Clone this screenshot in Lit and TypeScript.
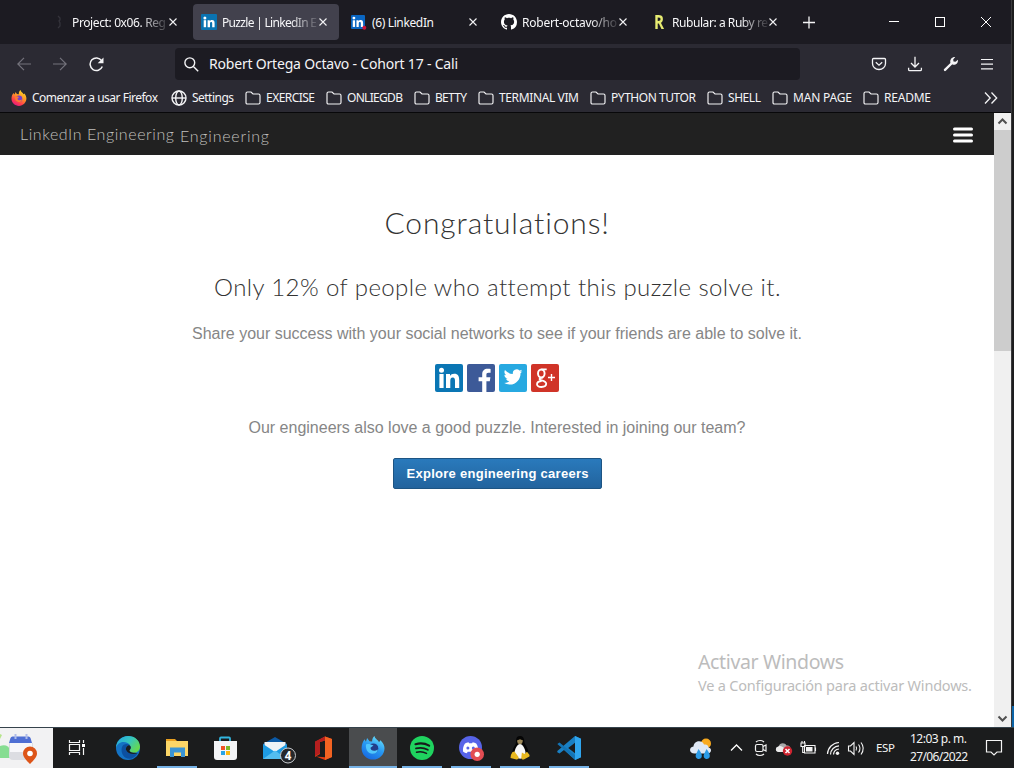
import { LitElement, html, svg, css } from "lit";
import { customElement, property } from "lit/decorators.js";
import { styleMap } from "lit/directives/style-map.js";
import { classMap } from "lit/directives/class-map.js";

/** A single line of text whose tracking is adjusted to fill a given width. */
@customElement("fit-text")
export class FitText extends LitElement {
  @property({ type: Number }) width = 0;
  static styles = css`
    :host { display: block; flex: none; white-space: pre; }
    .run { display: inline-block; }
  `;
  render() {
    return html`<span class="run"><slot></slot></span>`;
  }
  firstUpdated() {
    const run = this.renderRoot.querySelector(".run") as HTMLElement;
    const count = (this.textContent || "").length;
    const natural = run.getBoundingClientRect().width;
    this.style.width = this.width + "px";
    if (count > 1) this.style.letterSpacing = (this.width - natural) / (count - 1) + "px";
  }
}

/** An inline drawing cut out of a shared pixel grid. */
const icon = (x: number, y: number, w: number, h: number, body: unknown) =>
  html`<svg class="icon" width=${w} height=${h} viewBox="${x} ${y} ${w} ${h}" fill="none">${body}</svg>`;

const linkedInLetters = svg`<g fill="#fff"><circle cx="3.9" cy="3.9" r="1.5"/><rect x="2.7" y="6.2" width="2.4" height="7"/><path d="M6.6 6.2h2.2v1c.4-.7 1.2-1.2 2.2-1.2 2 0 2.6 1.2 2.6 3.2v4h-2.4V9.7c0-1-.2-1.7-1-1.7-.9 0-1.2.7-1.2 1.7v3.5H6.6z"/></g>`;

const favicons: Record<string, unknown> = {
  holberton: icon(0, 0, 16, 16, svg`<path d="M7 2l2 2v2l-1 1 1 2v3l-2 2" stroke="#34333b" stroke-width="1.3"/>`),
  linkedin: icon(0, 0, 16, 16, svg`<rect width="16" height="16" rx="1" fill="#0a73b1"/>${linkedInLetters}`),
  linkedinAlert: icon(0, 0, 16, 16, svg`<rect y="1" width="14" height="14" rx="1" fill="#0a66c2"/><g transform="translate(-.8 .4) scale(.95)">${linkedInLetters}</g><circle cx="13.3" cy="13.7" r="2" fill="#c8143c"/>`),
  github: icon(0, 0, 16, 16, svg`<path fill="#fff" d="M8 0C3.58 0 0 3.58 0 8c0 3.54 2.29 6.53 5.47 7.59.4.07.55-.17.55-.38 0-.19-.01-.82-.01-1.49-2.01.37-2.53-.49-2.69-.94-.09-.23-.48-.94-.82-1.13-.28-.15-.68-.52-.01-.53.63-.01 1.08.58 1.23.82.72 1.21 1.87.87 2.33.66.07-.52.28-.87.51-1.07-1.78-.2-3.64-.89-3.64-3.95 0-.87.31-1.59.82-2.15-.08-.2-.36-1.02.08-2.12 0 0 .67-.21 2.2.82.64-.18 1.32-.27 2-.27s1.36.09 2 .27c1.53-1.04 2.2-.82 2.2-.82.44 1.1.16 1.92.08 2.12.51.56.82 1.27.82 2.15 0 3.07-1.87 3.75-3.65 3.95.29.25.54.73.54 1.48 0 1.07-.01 1.93-.01 2.2 0 .21.15.46.55.38A8.01 8.01 0 0 0 16 8c0-4.42-3.58-8-8-8z"/>`),
  rubular: html`<span class="rubular">R</span>`,
};

const tabs = [
  { icon: "holberton", title: "Project: 0x06. Reg", width: 94 },
  { icon: "linkedin", title: "Puzzle | LinkedIn E", width: 95, active: true },
  { icon: "linkedinAlert", title: "(6) LinkedIn", width: 62 },
  { icon: "github", title: "Robert-octavo/ho", width: 95 },
  { icon: "rubular", title: "Rubular: a Ruby re", width: 96 },
];

const folder = icon(0, 0, 16, 16, svg`<path d="M1 13V3.5Q1 2 2.5 2H6l2 2h5.5Q15 4 15 5.500V12.500Q15 14 13.500 14H2.500Q1 14 1 12.500z" stroke="#f4f4f6" stroke-width="1.15"/>`);
const globe = icon(0, 0, 16, 16, svg`<g stroke="#f4f4f6" stroke-width="1.4"><circle cx="8" cy="8" r="7"/><ellipse cx="8" cy="8" rx="3.300" ry="7"/><path d="M1 8h14"/></g>`);
const firefox = icon(0, 0, 16, 16, svg`
  <defs><linearGradient id="ff" x1=".8" y1="0" x2=".25" y2="1"><stop offset="0" stop-color="#ffe226"/><stop offset=".45" stop-color="#ff9128"/><stop offset=".75" stop-color="#ff3d4d"/><stop offset="1" stop-color="#e31587"/></linearGradient></defs>
  <path fill="url(#ff)" d="M9.500 0c.3 2 2.300 2.400 3 4.200l.9-.6c1.400 1.600 2 3.300 2 5 0 4-3.300 7.300-7.400 7.300S.5 12.900.5 8.800C.5 6.500 1.200 4.500 2.500 3l.8 1.500C4 3.500 4.400 2.800 4.600 2l1.300 2.100 1.900.2C7.700 2.500 8.300 1 9.500 0z"/>
  <circle cx="8" cy="8.700" r="3.300" fill="#7542c9"/><path d="M4 6.500c1.600-.7 2.800 0 4 .7l-1.500 1.200C6.300 10 8.500 11 11 9.500c-.5 2-2 2.800-3.700 2.500C5 11.700 3.600 9.300 4 6.500z" fill="#ff7a2f"/>`);

const bookmarks = [
  { icon: firefox, label: "Comenzar a usar Firefox", slot: 160, width: 126 },
  { icon: globe, label: "Settings", slot: 74, width: 42 },
  { icon: folder, label: "EXERCISE", slot: 81, width: 49 },
  { icon: folder, label: "ONLIEGDB", slot: 88, width: 56 },
  { icon: folder, label: "BETTY", slot: 64, width: 32 },
  { icon: folder, label: "TERMINAL VIM", slot: 112, width: 80 },
  { icon: folder, label: "PYTHON TUTOR", slot: 117, width: 85 },
  { icon: folder, label: "SHELL", slot: 65, width: 33 },
  { icon: folder, label: "MAN PAGE", slot: 91, width: 59 },
  { icon: folder, label: "README", slot: 100, width: 47 },
];

const closeIcon = icon(0, 0, 8, 8, svg`<path d="M.5.5l7 7M7.500.5l-7 7" stroke="#f4f4f6" stroke-width="1.1"/>`);

const social = [
  icon(0, 0, 28, 28, svg`<rect width="28" height="28" rx="2" fill="#0a76b4"/><g fill="#fff"><circle cx="6.500" cy="6.200" r="2.500"/><rect x="4.400" y="10" width="4.200" height="14"/><path d="M11 10h4v1.900c.8-1.300 2.200-2.200 4.200-2.200 4 0 5 2.600 5 6.400V24H20v-7c0-1.800-.2-3.600-2.200-3.600-2.100 0-2.500 1.600-2.500 3.500V24H11z"/></g>`),
  icon(0, 0, 28, 28, svg`<rect width="28" height="28" rx="2" fill="#3d5a98"/><path fill="#fff" d="M15.200 28V17.300H11.600v-4h3.600v-3c0-3.600 2.200-5.500 5.400-5.500 1.500 0 2.500.1 3 .2v3.700h-2.100c-1.800 0-2.100.8-2.100 2.100v2.500h4l-.6 4h-3.400V28z"/>`),
  icon(0, 0, 28, 28, svg`<rect width="28" height="28" rx="2" fill="#27a9e1"/><path fill="#fff" transform="translate(4.700 3.600) scale(.78)" d="M23.950 4.570a10 10 0 0 1-2.820.77 4.960 4.960 0 0 0 2.160-2.720c-.95.550-2 .950-3.130 1.180a4.920 4.920 0 0 0-8.380 4.480C7.690 8.090 4.070 6.130 1.640 3.160a4.820 4.820 0 0 0-.67 2.470c0 1.710.87 3.210 2.190 4.100a4.900 4.900 0 0 1-2.230-.62v.06a4.920 4.920 0 0 0 3.950 4.830 5 5 0 0 1-2.210.08 4.940 4.940 0 0 0 4.600 3.420A9.870 9.870 0 0 1 0 19.540a13.990 13.990 0 0 0 7.550 2.210c9.050 0 14-7.500 14-13.980 0-.21 0-.42-.02-.63a9.940 9.940 0 0 0 2.460-2.550z"/>`),
  icon(0, 0, 28, 28, svg`<rect width="28" height="28" rx="2" fill="#d03428"/><g stroke="#fff"><ellipse cx="10.300" cy="9.500" rx="3.300" ry="4" stroke-width="1.900"/><path d="M10.500 5.400h5.200M12 13.300c-2 .5-3.600 1-3.500 1.900.1 1.200 6.700 1.300 6.700 4.400 0 2.200-2.200 3.400-4.800 3.400s-4.400-1-4.400-2.800c0-2 2.500-3 4.500-3.200" stroke-width="1.800"/><path d="M17 13.500h7M20.500 10v7" stroke-width="1.400"/></g>`),
];

/* Taskbar drawings use window coordinates, one 48px cell each. */
const cell = (x: number, body: unknown) => icon(x, 727, 48, 41, body);

const apps = [
  { art: cell(104, svg`<defs><linearGradient id="e1" x1="0" y1="0" x2="1" y2=".6"><stop offset="0" stop-color="#21a5e8"/><stop offset=".55" stop-color="#37c6bd"/><stop offset="1" stop-color="#65d94f"/></linearGradient></defs>
    <circle cx="128" cy="748" r="12" fill="#1473c5"/>
    <path fill="url(#e1)" d="M116 748c0-7 5.500-12 12.200-12 7 0 11.800 5 11.800 10.500 0 4-2.800 6.300-6.300 6.300-3 0-4.900-1-4.300-2 1.200-2 1.500-3 1-4.500-1-3-4-4.300-7-4.300-3.500 0-6.500 2.200-7.400 6z"/>
    <path fill="#0c50a0" d="M122 747c1-3 5-4 7.500-2-2.500 0-4.300 2.500-3.300 5.300 1.200 3.300 6.500 4.800 11.500 3-2.700 5-8 6.800-12 4.500-3.500-2-5-7-3.700-10.800z"/>
    <path fill="#1b1d1f" d="M129.400 745.200c2 1 1.800 3.300.3 4.800-1.100 1.200 2 3 5.300 2.700l2.700.6c-5 1.800-10.300.3-11.500-3-.9-2.500.7-5.100 3.200-5.100z"/>`) },
  { run: 1, art: cell(153, svg`<path fill="#e9a020" d="M166 739h9l2 2h10v4h-21z"/><rect x="166" y="741" width="22" height="15" fill="#fcd667"/><path fill="#3a94d4" d="M170 747.500h15V757h-4v-4.500h-7V757h-4z"/>`) },
  { art: cell(202, svg`<path d="M220 742v-3.500q0-1 1-1h8q1 0 1 1v3.500" stroke="#32b5df" stroke-width="1.800"/><path fill="#f4f5f7" d="M214 741h23v16q0 3-3 3h-17q-3 0-3-3z"/><path fill="#ef5426" d="M221 746h4v4h-4z"/><path fill="#7eb928" d="M226 746h4v4h-4z"/><path fill="#28a4e6" d="M221 751h4v4h-4z"/><path fill="#fab812" d="M226 751h4v4h-4z"/>`) },
  { art: cell(251, svg`<path fill="#0c5aa6" d="M263 744l12-7 12 7v5h-24z"/><path fill="#eef3f7" d="M264.500 742h21v9l-10.500 5-10.500-5z"/><path fill="#1d9be3" d="M263 744l12 8 12-8v15h-24z"/><path fill="#53bdf0" d="M263 759l12-8.500 12 8.500z"/><circle cx="288" cy="755.500" r="7.500" fill="#26282b" stroke="#c9cccf" stroke-width="1"/><text x="288" y="759.500" text-anchor="middle" font-family="Noto Sans" font-size="11.500" font-weight="700" fill="#fff">4</text>`) },
  { art: cell(300, svg`<path fill="#e43b12" d="M325 736.500l7 2.500v18l-7 3-9-3.500 9 .7v-16.700l-5 1.500v12l-5 3V742z"/><path fill="#b61f1f" d="M325 736.500l-10 5V756l5-2.800V742l5-1.500z"/><path fill="#f26322" d="M325 736.500l7 2.500v18l-7 3z"/>`) },
  { run: 2, art: cell(349, svg`<defs><linearGradient id="fd" x1=".8" y1="0" x2=".3" y2="1"><stop offset="0" stop-color="#6de3fa"/><stop offset=".5" stop-color="#2899f2"/><stop offset="1" stop-color="#1769e0"/></linearGradient></defs><path fill="url(#fd)" d="M374.500 736c.5 3 3.500 3.700 4.500 6.200l1.500-2c3 3 4 5.700 4 8 0 6.300-5.200 11.400-11.500 11.400s-11.400-5.100-11.400-11.400c0-3.500 1-6.500 3-9l1.300 2.500 1.200-3.700 2.400 3.200 2.600.3c0-2.500.9-4.400 2.400-5.500z"/><circle cx="373.300" cy="748.400" r="5" fill="#233d89"/><path fill="#4fc6fc" d="M366 744.500c2.500-1 5 0 7.500 1l-3 2.300c0 2.700 3.600 4.300 7.500 1.700-1 4-4 5-7 4-4-1-5.500-5-5-9z"/>`) },
  { run: 1, art: cell(398, svg`<circle cx="422" cy="748" r="12" fill="#1fd35f"/><g stroke="#17191b" stroke-linecap="round"><path d="M415.500 744.200c4.500-1.300 9.700-.8 13.600 1.400" stroke-width="2.200"/><path d="M416 748.400c4-1.100 8.300-.6 11.800 1.300" stroke-width="1.800"/><path d="M416.500 752.200c3.500-.8 7-.5 10 1.200" stroke-width="1.500"/></g>`) },
  { run: 1, art: cell(447, svg`<circle cx="470.500" cy="747.500" r="11.500" fill="#5764e8"/><path fill="#fff" d="M465 743.500c1-.8 2.200-1.200 3.500-1.300l.6 1h3l.6-1c1.300.1 2.500.5 3.500 1.300 1.600 2.400 2.300 5 2 8-1.200 1-2.500 1.500-3.800 1.700l-.9-1.500h-5.800l-.9 1.500c-1.300-.2-2.600-.7-3.800-1.700-.3-3 .4-5.600 2-8z"/><circle cx="467.900" cy="748" r="1.500" fill="#5764e8"/><circle cx="473.300" cy="748" r="1.500" fill="#5764e8"/><circle cx="477.200" cy="754.300" r="6.800" fill="#e34d53"/><circle cx="477.200" cy="754.300" r="2.600" fill="#fff"/>`) },
  { run: 1, art: cell(496, svg`<path fill="#050505" d="M516 742c0-4 1-6 4-6s4.300 2 4.300 5.500c0 3 4 6 4 11.500 0 4-3 6-8 6s-8-2-8-6c0-5 3.700-8 3.700-11z"/><path fill="#f7f7f7" d="M520 744c2.500 0 5.500 5 5.500 9s-2 5.700-5.300 5.700-5.700-1.700-5.700-5.700 3-9 5.500-9z"/><path fill="#9c8858" d="M517 740.500l3-1.200 3 1.200-1 3-2 .8-2.200-.8z"/><path fill="#e8b81f" d="M512.500 752l2-.5 4 5.500c.6 1.600-.5 2.600-2 2.500l-6-1.600.4-3zM527 751.800l2.600 3.200-.2 1.400-5.600 3c-1.500.4-2.600-.6-2.500-2l.6-5 2.500 1.600z"/>`) },
  { run: 1, art: cell(545, svg`<path fill="#1a80c4" d="M575 736l6 2.700v18.600l-6 2.700-11-10-4.500 3.500-2.200-1.200v-1.300L575 736zm0 6.800l-6.800 5.200 6.800 5.200z" fill-rule="evenodd"/><path fill="#1374b6" d="M557.300 744l2.200-1.500L576 756v4z"/><path fill="#2fa5ee" d="M575 736l6 2.700v18.600l-6 2.700z"/>`) },
];

@customElement("app-root")
export class AppRoot extends LitElement {
  static styles = css`
    :host { display: block; width: 1014px; height: 768px; overflow: hidden; font-family: "Noto Sans", sans-serif; }
    .screen { position: relative; display: flex; flex-direction: column; width: 1014px; height: 768px; background: #fff; }
    .icon { display: block; flex: none; }
    .window { display: flex; height: 727px; flex: none; }
    .browser { display: flex; flex-direction: column; width: 1011px; }
    .edge { display: flex; flex-direction: column; width: 2px; border-left: 1px solid #3a3a3c; background: #1d1d1e; }
    .edge-blue { margin-top: auto; height: 21px; background: #0b64a8; }

    .tabbar { display: flex; height: 44px; background: #1c1b22; color: #f7f7f9; font-size: 12px; }
    .tabs { display: flex; gap: 4px; padding: 4px 0 4px 43px; }
    .tab { display: flex; align-items: center; box-sizing: border-box; width: 146px; height: 36px; padding: 0 12px 0 8px; border-radius: 4px; }
    .active { background: #42414d; }
    .title { width: 97px; margin: 1px 0 0 5px; overflow: hidden; line-height: 20px; }
    .faded { mask-image: linear-gradient(to right, #000 70%, transparent 102%); }
    .rubular { width: 16px; text-align: center; font: 700 19px/20px "Open Sans", sans-serif; transform: scaleX(.8); color: #e7ec72; }
    .newtab { margin: 16px 0 0 14px; }
    .controls { display: flex; margin: 16px 20px 0 auto; gap: 36px; }

    .navbar { display: flex; align-items: center; height: 40px; background: #2b2a33; }
    .nav { display: flex; align-items: center; width: 158px; padding-left: 17px; gap: 22px; }
    .url { display: flex; align-items: center; box-sizing: border-box; width: 625px; height: 32px; padding-left: 9px; gap: 10px; border-radius: 4px; background: #1c1b22; color: #f4f4f6; font-size: 14px; line-height: 20px; margin-top: 0; }
    .actions { display: flex; align-items: center; gap: 20px; margin-left: 71px; }

    .bookmarks { display: flex; align-items: center; height: 28px; padding-left: 11px; background: #2b2a33; border-bottom: 1px solid #08080a; color: #f4f4f6; font-size: 12px; line-height: 18px; }
    .bookmark { display: flex; align-items: center; gap: 5px; flex: none; }
    .more { margin-left: 21px; }

    .viewport { display: flex; flex: 1; min-height: 0; }
    .page { display: flex; flex-direction: column; align-items: center; width: 994px; background: #fff; color: #868686; font: 16px/23px "Liberation Sans", sans-serif; }
    .site { display: flex; box-sizing: border-box; align-self: stretch; height: 42px; padding: 9px 21px 0 20px; background: #212121; color: #c0c0be; font: 16px/24px Lato, sans-serif; }
    .brand { font-weight: 300; }
    .section { margin: 2px 0 0 6px; font-weight: 300; }
    .burger { margin: 5px 0 0 auto; }
    .heading { margin: 47px 0 0; color: #333; font: 300 30px/40px Lato, sans-serif; }
    .lead { margin: 29px 0 0; color: #333; font: 300 24px/31px Lato, sans-serif; }
    .share { margin-top: 20px; }
    .social { display: flex; gap: 4px; margin-top: 19px; }
    .join { margin-top: 24px; }
    .cta { box-sizing: border-box; display: flex; justify-content: center; width: 209px; height: 31px; margin: 19px 0 0 1px; padding: 0; border: 1px solid #1d5483; border-radius: 2px; background: linear-gradient(#2a7abc, #22639d); color: #fff; font: 700 13px/29px "Liberation Sans", sans-serif; }

    .scrollbar { display: flex; flex-direction: column; width: 17px; background: #f0f0f0; }
    .thumb { height: 221px; background: #cdcdcd; }
    .down { margin-top: auto; }

    .watermark { position: absolute; left: 698px; top: 647px; color: #bcbcbc; font-weight: 400; }
    .wm-title { font-size: 19.5px; line-height: 29px; }
    .wm-body { font-size: 14.5px; line-height: 18px; }

    .taskbar { display: flex; height: 41px; flex: none; background: #1b1c1d; color: #f4f4f4; font-size: 12px; }
    .taskbar { box-shadow: inset 0 1px #35434c; }
    .apps { display: flex; gap: 1px; margin-left: 3px; }
    .app { position: relative; width: 48px; height: 41px; }
    .focused { background: linear-gradient(#35434c 1px, #4a4c4e 1px); }
    .running::after { content: ""; position: absolute; left: 4px; right: 4px; bottom: 0; height: 2px; background: #76b2e6; }
    .focused::after { left: 0; right: 0; }
    .tray { margin-left: 92px; }
    .lang { margin: 12px 0 0 6px; line-height: 18px; font-size: 11.5px; }
    .clock { margin: 3px 0 0 15px; line-height: 18px; }
  `;

  private chromeTop() {
    return html`
      <div class="tabbar">
        <div class="tabs">
          ${tabs.map((t) => html`
            <div class=${classMap({ tab: true, active: !!t.active })}>
              ${favicons[t.icon]}
              <div class=${classMap({ title: true, faded: t.width > 80 })}><fit-text width=${t.width}>${t.title}</fit-text></div>
              ${closeIcon}
            </div>`)}
        </div>
        <div class="newtab">${icon(0, 0, 12, 13, svg`<path d="M0 6.500h12M6 .5v12" stroke="#f4f4f6" stroke-width="1.300"/>`)}</div>
        <div class="controls">
          ${icon(0, 0, 10, 12, svg`<path d="M0 5.500h10" stroke="#fff"/>`)}
          ${icon(0, 0, 10, 12, svg`<rect x=".5" y="1.500" width="9" height="9" stroke="#fff"/>`)}
          ${icon(0, 0, 10, 12, svg`<path d="M0 1l10 10M10 1L0 11" stroke="#fff"/>`)}
        </div>
      </div>
      <div class="navbar">
        <div class="nav">
          ${icon(0, 0, 14, 14, svg`<path d="M14 7H.8M7 .8L.8 7 7 13.200" stroke="#74737c" stroke-width="1.200"/>`)}
          ${icon(0, 0, 14, 14, svg`<path d="M0 7h13.200M7 .8L13.200 7 7 13.200" stroke="#74737c" stroke-width="1.200"/>`)}
          ${icon(0, 0, 15, 15, svg`<path d="M12.600 3.600A6.300 6.300 0 1 0 13.300 9.500" stroke="#f4f4f6" stroke-width="1.500"/><path d="M14.500.5v5.800H8.700z" fill="#f4f4f6"/>`)}
        </div>
        <div class="url">
          ${icon(0, 0, 15, 15, svg`<circle cx="5.800" cy="5.800" r="4.900" stroke="#f4f4f6" stroke-width="1.400"/><path d="M9.400 9.400l4.800 4.800" stroke="#f4f4f6" stroke-width="1.400"/>`)}
          <fit-text width="249">Robert Ortega Octavo - Cohort 17 - Cali</fit-text>
        </div>
        <div class="actions">
          ${icon(0, 0, 16, 16, svg`<path d="M2.500 2.500h11q1 0 1 1v4a6.500 6 0 0 1-13 0v-4q0-1 1-1z" stroke="#f4f4f6" stroke-width="1.300"/><path d="M4.800 6.300L8 9.200l3.200-2.900" stroke="#f4f4f6" stroke-width="1.300"/>`)}
          ${icon(0, 0, 16, 16, svg`<path d="M8 .8v10M4 7l4 4 4-4M1.600 11.800v1.700q0 1.200 1.200 1.200h10.400q1.200 0 1.200-1.200v-1.700" stroke="#f4f4f6" stroke-width="1.300"/>`)}
          ${icon(0, 0, 16, 16, svg`<path d="M2 13.900L9 7" stroke="#f4f4f6" stroke-width="2.400" stroke-linecap="round"/><path fill="#f4f4f6" d="M7.300 6.500c-.4-3 1.500-5.500 4.900-5.400l-2 2.300.3 2 2 .4 2.400-2c.5 3.400-2 5.400-5 5z"/>`)}
          ${icon(0, 0, 16, 16, svg`<path d="M2 3.500h12M2 8.200h12M2 12.800h12" stroke="#f4f4f6" stroke-width="1.200"/>`)}
        </div>
      </div>
      <div class="bookmarks">
        ${bookmarks.map((b) => html`
          <div class="bookmark" style=${styleMap({ width: b.slot + "px" })}>${b.icon}<fit-text width=${b.width}>${b.label}</fit-text></div>`)}
        <div class="more">${icon(0, 0, 14, 12, svg`<path d="M1 .5L6.200 6 1 11.500M7.500.5L12.700 6l-5.200 5.500" stroke="#f4f4f6" stroke-width="1.300"/>`)}</div>
      </div>`;
  }

  private page() {
    return html`
      <div class="page">
        <header class="site">
          <fit-text class="brand" width="154">LinkedIn Engineering</fit-text>
          <fit-text class="section" width="89">Engineering</fit-text>
          <div class="burger">${icon(0, 0, 20, 16, svg`<path d="M1.500 2h17M1.500 8h17M1.500 14h17" stroke="#fff" stroke-width="3" stroke-linecap="round"/>`)}</div>
        </header>
        <h1 class="heading"><fit-text width="225">Congratulations!</fit-text></h1>
        <h2 class="lead"><fit-text width="566">Only 12% of people who attempt this puzzle solve it.</fit-text></h2>
        <fit-text class="share" width="610">Share your success with your social networks to see if your friends are able to solve it.</fit-text>
        <div class="social">${social}</div>
        <fit-text class="join" width="497">Our engineers also love a good puzzle. Interested in joining our team?</fit-text>
        <button class="cta"><fit-text width="182">Explore engineering careers</fit-text></button>
      </div>`;
  }

  private tray() {
    return html`
      <div class="tray">${icon(685, 727, 185, 41, svg`
        <circle cx="706" cy="743.500" r="5" fill="#f8a91f"/>
        <path fill="#dfe8f5" d="M694.500 753.500c-5.500 0-6-6.500-1-7 .5-6 8.500-7 10.500-2 3-.5 4.500 1 4.500 3 4 1 3 6-1 6z"/>
        <path fill="#2c9ce8" d="M698.500 749c2.600 3.500 3.500 5.300 3.300 7.300-.2 2-2 3-3.800 2.600-2-.5-3-2.500-2-4.700zM706.500 749c2.600 3.500 3.500 5.300 3.300 7.300-.2 2-2 3-3.800 2.600-2-.5-3-2.500-2-4.700z"/>
        <path d="M731 750.500l5.500-5.500 5.500 5.500" stroke="#fff" stroke-width="1.300"/>
        <g stroke="#f2f2f2" stroke-width="1.200"><rect x="755.500" y="744.500" width="7.500" height="7" rx="1.500"/><path d="M763 746.500l3-1.500v6l-3-1.500M756 742c2-2 6-2 8 0M756 754c2 2 6 2 8 0"/></g>
        <path fill="#a9a9a9" d="M779 752c-4 0-4-5-.5-5.500 1-4 6.500-4.500 8-1 3-.5 4.500 1.500 4 6z"/><path fill="#ececec" d="M779 752c-4 0-4-5-.5-5.500 2-1 4 0 6 2v3.500z"/>
        <circle cx="787.500" cy="751" r="4.700" fill="#cf2430"/><path d="M785.500 749l4 4M789.500 749l-4 4" stroke="#fff" stroke-width="1.500"/>
        <path d="M804.500 745.500h10.500v7.500h-10.500zM815.500 747.500v3.500M801 743h4v3.500h-4zM802 741v2M804.500 741v2M802.700 746.500v6h1.800" stroke="#f4f4f4" stroke-width="1.100"/><path fill="#f4f4f4" d="M806 747h6.500v4.500H806z"/>
        <g stroke="#f2f2f2" stroke-width="1.200"><path d="M827.500 754a12 12 0 0 1 11.500-11.500M830.500 754.500a9 9 0 0 1 8.500-8.700M833.500 754.500a6 6 0 0 1 5.500-5.500" /></g><circle cx="837.500" cy="753.200" r="1.700" fill="#f4f4f4"/>
        <g stroke="#f4f4f4" stroke-width="1.100"><path d="M848.500 746h2l3.500-3.500v12l-3.500-3.500h-2zM856 746.500q1.300 1.700 0 4M858.500 744.500q3 3.700 0 8M861 742.500q4.500 5.700 0 12"/></g>`)}</div>
      <fit-text class="lang" width="19">ESP</fit-text>
      <div class="clock">
        <fit-text width="57">12:03 p. m.</fit-text>
        <fit-text width="58">27/06/2022</fit-text>
      </div>
      <div>${icon(968, 727, 46, 41, svg`<path d="M986.500 740.500h15v11.500h-4.500l-3 3-3-3h-4.500z" stroke="#f4f4f4" stroke-width="1.200"/>`)}</div>`;
  }

  render() {
    return html`
      <div class="screen">
        <div class="window">
          <div class="browser">
            ${this.chromeTop()}
            <div class="viewport">
              ${this.page()}
              <div class="scrollbar">
                ${icon(0, 0, 17, 17, svg`<path d="M4.500 10.500l4-4 4 4" stroke="#505050" stroke-width="2"/>`)}
                <div class="thumb"></div>
                <div class="down">${icon(0, 0, 17, 17, svg`<path d="M4.500 6.500l4 4 4-4" stroke="#505050" stroke-width="2"/>`)}</div>
              </div>
            </div>
          </div>
          <div class="edge"><div class="edge-blue"></div></div>
        </div>
        <div class="taskbar">
          ${icon(0, 727, 101, 41, svg`
            <rect y="728" width="53" height="40" fill="#f2f2f3"/>
            <path fill="#86dd92" d="M0 746c5-2 9 0 10 4v8H0z"/><path fill="#b6e58b" d="M0 734l2 1-2 4z"/>
            <path fill="#dcdde2" d="M9 743h24v13q0 4-4 4H13q-4 0-4-4z"/><path fill="#f7f7fa" d="M10 743h22v9H10z"/>
            <path fill="#4f6fd4" d="M9 743l1.500-5q.5-1.500 2-1.500h16q1.500 0 2 1.500l1.500 5z"/><path d="M15.500 734v5M26.500 734v5" stroke="#aebbe9" stroke-width="2"/>
            <path fill="#dd5519" d="M30 764c-4-4-7-7-7-10.500a7 7 0 0 1 14 0c0 3.500-3 6.500-7 10.500z"/><circle cx="30" cy="753.500" r="2.800" fill="#fff"/>
            <g stroke="#f4f4f4" stroke-width="1.200"><path d="M69.500 740v2.500h10V740M69.500 755v-2.500h10V755M69.500 744.500h10v6h-10zM83.500 740v3M83.500 748v7"/></g><rect x="82" y="744" width="3" height="3" fill="#fff"/>`)}
          <div class="apps">
            ${apps.map((a) => html`<div class=${classMap({ app: true, running: !!a.run, focused: a.run === 2 })}>${a.art}</div>`)}
          </div>
          ${this.tray()}
        </div>
        <div class="watermark">
          <fit-text class="wm-title" width="146">Activar Windows</fit-text>
          <fit-text class="wm-body" width="274">Ve a Configuración para activar Windows.</fit-text>
        </div>
      </div>`;
  }
}
